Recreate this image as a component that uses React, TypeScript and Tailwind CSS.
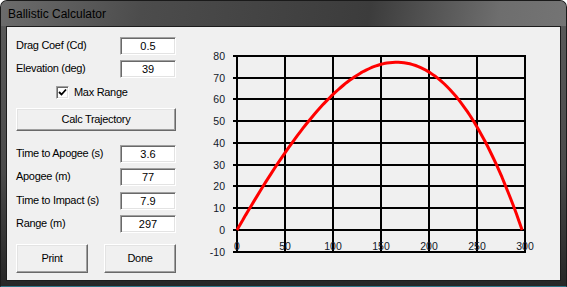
import React from "react";

const font = "font-['Liberation_Sans',Arial,sans-serif]";

const X = (v: number) => Math.round(47 + v * 0.96);
const Y = (v: number) => Math.round(193 - v * 2.178);

const trajectory = (x: number) => 0.002581 * x * (297 - x) * (1 + 0.002243 * x);

const points = Array.from({ length: 100 }, (_, i) => {
  const x = (297 * i) / 99;
  return `${(47 + x * 0.96).toFixed(1)},${(193 - trajectory(x) * 2.178).toFixed(1)}`;
}).join(" ");

function Field({ label, value, className = "" }: { label: string; value: string; className?: string }) {
  return (
    <div className={`flex h-[18px] items-center ${className}`}>
      <span className="-mt-[2px] whitespace-nowrap tracking-[-0.3px]">{label}</span>
      <div className="ml-auto flex h-[18px] w-[56px] items-center justify-center border border-t-[#a0a0a0] border-l-[#a0a0a0] border-r-white border-b-white bg-white shadow-[inset_1px_1px_0_#696969,inset_-1px_-1px_0_#e3e3e3]">
        {value}
      </div>
    </div>
  );
}

function Button({ children, className = "" }: { children: React.ReactNode; className?: string }) {
  return (
    <div
      className={`flex items-center justify-center border border-t-white border-l-white border-r-[#696969] border-b-[#696969] bg-[#f0f0f0] shadow-[inset_-1px_-1px_0_#a0a0a0,inset_1px_1px_0_#e3e3e3] tracking-[-0.3px] ${className}`}
    >
      {children}
    </div>
  );
}

function Chart() {
  const ys = [80, 70, 60, 50, 40, 30, 20, 10, 0, -10];
  const xs = [0, 50, 100, 150, 200, 250, 300];
  return (
    <svg width={360} height={230} className="ml-[14px] shrink-0">
      {ys.map((v) => (
        <line key={`h${v}`} x1={43} x2={X(300) + 1} y1={Y(v)} y2={Y(v)} stroke="#000" strokeWidth={2} shapeRendering="crispEdges" />
      ))}
      {xs.map((v) => (
        <line key={`v${v}`} x1={X(v)} x2={X(v)} y1={Y(80) - 1} y2={Y(-10) + 1} stroke="#000" strokeWidth={2} shapeRendering="crispEdges" />
      ))}
      {ys.map((v) => (
        <text key={`yl${v}`} x={35} y={Y(v)} dy="0.35em" textAnchor="end" fontSize={10.5} fill="#101828" fontFamily="Liberation Sans, Arial, sans-serif">
          {v}
        </text>
      ))}
      {xs.map((v) => (
        <text key={`xl${v}`} x={X(v)} y={209.5} dy="0.35em" textAnchor="middle" fontSize={10.5} fill="#101828" fontFamily="Liberation Sans, Arial, sans-serif">
          {v}
        </text>
      ))}
      <polyline points={points} fill="none" stroke="#ff0000" strokeWidth={3} strokeLinejoin="round" />
    </svg>
  );
}

export default function App() {
  return (
    <div className={`${font} h-[287px] w-[567px] overflow-hidden bg-white`}>
      <div className="flex h-full w-full flex-col rounded-t-[7px] border border-[#1a1a1a] border-b-[#2e7487] bg-[linear-gradient(to_bottom,#5c5c5c,#4a4a4a_60%,#262626)]">
        <div className="flex h-[25px] shrink-0 items-center rounded-t-[6px] bg-[linear-gradient(100deg,#6c6c6c_0%,#4c4c4c_25%,#3c3c3c_65%,#6e6e6e_88%,#747474_100%)] pl-[7px] text-[12px] text-black">
          Ballistic Calculator
        </div>
        <div className="mx-[5px] mb-[5px] flex flex-1 items-start border border-[#1c1c1c] bg-[#f0f0f0] pl-[9px] pt-[10px] text-[11px] text-black">
          <div className="flex w-[160px] shrink-0 flex-col">
            <Field label="Drag Coef (Cd)" value="0.5" />
            <Field label="Elevation (deg)" value="39" className="mt-[5px]" />
            <div className="mt-[8px] flex h-[13px] items-center pl-[40px]">
              <div className="flex h-[13px] w-[13px] items-center justify-center border border-t-[#a0a0a0] border-l-[#a0a0a0] border-r-white border-b-white bg-white shadow-[inset_1px_1px_0_#696969,inset_-1px_-1px_0_#e3e3e3]">
                <svg width={9} height={9} viewBox="0 0 9 9">
                  <path d="M1 4 L3.5 6.5 L8 1.5" fill="none" stroke="#000" strokeWidth={1.8} />
                </svg>
              </div>
              <span className="ml-[5px] tracking-[-0.3px]">Max Range</span>
            </div>
            <Button className="mt-[9px] h-[23px]">Calc Trajectory</Button>
            <Field label="Time to Apogee (s)" value="3.6" className="mt-[14px]" />
            <Field label="Apogee (m)" value="77" className="mt-[5px]" />
            <Field label="Time to Impact (s)" value="7.9" className="mt-[6px]" />
            <Field label="Range (m)" value="297" className="mt-[5px]" />
            <div className="mt-[11px] flex gap-[16px]">
              <Button className="h-[29px] w-[72px]">Print</Button>
              <Button className="h-[29px] w-[72px]">Done</Button>
            </div>
          </div>
          <Chart />
        </div>
      </div>
    </div>
  );
}
